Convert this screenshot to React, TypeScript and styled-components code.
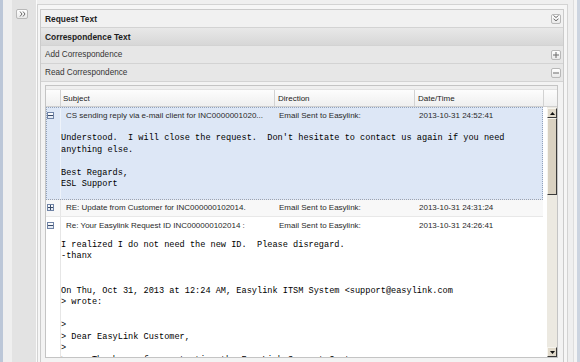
import styled, { createGlobalStyle } from "styled-components";

const GlobalStyle = createGlobalStyle`
  html, body {
    margin: 0;
    padding: 0;
    overflow: hidden;
  }
  body {
    background: #efefef;
    font-family: "Liberation Sans", Arial, sans-serif;
  }
`;

type Mail = {
  subject: string;
  direction: string;
  date: string;
  body?: string;
};

const mails: Mail[] = [
  {
    subject: "CS sending reply via e-mail client for INC0000001020...",
    direction: "Email Sent to Easylink:",
    date: "2013-10-31 24:52:41",
    body: `Understood.  I will close the request.  Don't hesitate to contact us again if you need
anything else.

Best Regards,
ESL Support`,
  },
  {
    subject: "RE: Update from Customer for INC000000102014.",
    direction: "Email Sent to Easylink:",
    date: "2013-10-31 24:31:24",
  },
  {
    subject: "Re: Your Easylink Request ID INC000000102014 :",
    direction: "Email Sent to Easylink:",
    date: "2013-10-31 24:26:41",
    body: `I realized I do not need the new ID.  Please disregard.
-thanx


On Thu, Oct 31, 2013 at 12:24 AM, Easylink ITSM System <support@easylink.com
> wrote:

>
> Dear EasyLink Customer,
>
>     Thank you for contacting the EasyLink Support Center.`,
  },
];

const App: React.FC = () => {
  return (
    <>
      <GlobalStyle />
      <Page>
        <SideBar>
          <SmallButton $w={12} $h={10}>
            <svg width="7" height="6" viewBox="0 0 7 6">
              <path d="M1 0.5 L3 3 L1 5.5 M4 0.5 L6 3 L4 5.5" stroke="#6a6a6a" fill="none" />
            </svg>
          </SmallButton>
        </SideBar>
        <Frame>
          <Accordion>
            <PanelHeader $variant="light" $bold>
              Request Text
              <SmallButton $w={10} $h={10}>
                <svg width="6" height="7" viewBox="0 0 6 7">
                  <path d="M0.5 0.5 L3 2.5 L5.5 0.5 M0.5 3.8 L3 5.8 L5.5 3.8" stroke="#6a6a6a" fill="none" />
                </svg>
              </SmallButton>
            </PanelHeader>
            <PanelHeader $variant="active" $bold>
              Correspondence Text
            </PanelHeader>
            <PanelHeader $variant="sub">
              Add Correspondence
              <SmallButton $w={10} $h={10}>
                <svg width="6" height="6" viewBox="0 0 6 6">
                  <path d="M0 3 H6 M3 0 V6" stroke="#6a6a6a" />
                </svg>
              </SmallButton>
            </PanelHeader>
            <PanelHeader $variant="sub">
              Read Correspondence
              <SmallButton $w={10} $h={10}>
                <svg width="6" height="6" viewBox="0 0 6 6">
                  <path d="M0 3 H6" stroke="#6a6a6a" />
                </svg>
              </SmallButton>
            </PanelHeader>
            <PanelContent>
              <Grid>
                <GridTop />
                <HeadRow>
                  <HeadCell $w={15} $pad={0} />
                  <HeadCell $w={214} $pad={2}>Subject</HeadCell>
                  <HeadCell $w={140} $pad={3}>Direction</HeadCell>
                  <HeadCell $w={129} $pad={3}>Date/Time</HeadCell>
                  <HeadCell $pad={0} $last />
                </HeadRow>
                <GridBody>
                  <Rows>
                    {mails.map((m, i) => (
                      <MailRow key={i} $selected={i === 0} $alt={i === 1}>
                        <RowHead $h={i === 1 ? 16 : 17}>
                          <ExpandCell $selected={i === 0}>
                            <Toggle>
                              <svg width="5" height="5" viewBox="0 0 5 5">
                                <path d={m.body ? "M0 2.5 H5" : "M0 2.5 H5 M2.5 0 V5"} stroke="#3a4a66" />
                              </svg>
                            </Toggle>
                          </ExpandCell>
                          <Cell $w={214} $pad={5}>{m.subject}</Cell>
                          <Cell $w={140} $pad={4}>{m.direction}</Cell>
                          <Cell $pad={4}>{m.date}</Cell>
                        </RowHead>
                        {m.body && (
                          <MailBody $selected={i === 0} $top={i === 0 ? 9 : 6}>
                            {m.body}
                          </MailBody>
                        )}
                      </MailRow>
                    ))}
                  </Rows>
                  <ScrollGap />
                  <ScrollBar>
                    <ScrollButton>
                      <svg width="5" height="3" viewBox="0 0 5 3">
                        <path d="M0 3 L2.5 0 L5 3 Z" fill="#111" />
                      </svg>
                    </ScrollButton>
                    <Thumb />
                    <Track />
                    <ScrollButton>
                      <svg width="5" height="3" viewBox="0 0 5 3">
                        <path d="M0 0 L2.5 3 L5 0 Z" fill="#111" />
                      </svg>
                    </ScrollButton>
                  </ScrollBar>
                </GridBody>
              </Grid>
            </PanelContent>
          </Accordion>
        </Frame>
        <RightEdge />
      </Page>
    </>
  );
};

const Page = styled.div`
  display: flex;
  width: 580px;
  height: 362px;
  box-sizing: border-box;
  border-left: 3px solid #bcc7d8;
  padding-left: 9px;
  background: #efefef;
  overflow: hidden;
`;

const SideBar = styled.div`
  flex: none;
  width: 25px;
  box-sizing: border-box;
  background: #e3e3e3;
  border-right: 1px solid #fafafa;
  padding: 9px 0 0 4px;
`;

const SmallButton = styled.div<{ $w: number; $h: number }>`
  width: ${(p) => p.$w}px;
  height: ${(p) => p.$h}px;
  box-sizing: border-box;
  border: 1px solid #b8b8b8;
  border-radius: 2px;
  background: linear-gradient(#ffffff, #e9e9e9);
  display: flex;
  align-items: center;
  justify-content: center;
  flex: none;
`;

const Frame = styled.div`
  flex: none;
  width: 531px;
  box-sizing: border-box;
  margin-top: 4px;
  border: 1px solid #d3d3d3;
  border-bottom: none;
  background: #f6f6f6;
  padding: 4px 3px 0 2px;
  display: flex;
  flex-direction: column;
`;

const RightEdge = styled.div`
  flex: 1;
  background: linear-gradient(
    to right,
    #efefef 0 5px,
    #dddddd 5px 6px,
    #f4f4f4 6px 9px,
    #ccd4e0 9px
  );
`;

const Accordion = styled.div`
  flex: 1;
  display: flex;
  flex-direction: column;
  border: 1px solid #cbcbcb;
  border-bottom: none;
  background: #f1f1f1;
  min-height: 0;
`;

const headerBg = {
  light: "#f1f1f1",
  active: "linear-gradient(#e8e8e8, #d7d7d7)",
  sub: "#e7e7e7",
};

const PanelHeader = styled.div<{ $variant: keyof typeof headerBg; $bold?: boolean }>`
  height: 17px;
  flex: none;
  display: flex;
  align-items: center;
  justify-content: space-between;
  padding: 0 2px 0 4px;
  border-bottom: 1px solid #d3d3d3;
  background: ${(p) => headerBg[p.$variant]};
  font-size: ${(p) => (p.$bold ? "8.4px" : "8.2px")};
  font-weight: ${(p) => (p.$bold ? "bold" : "normal")};
  color: ${(p) => (p.$bold ? "#1d1d1d" : "#353535")};
`;

const PanelContent = styled.div`
  flex: 1;
  min-height: 0;
  display: flex;
  padding: 3px 5px 4px 4px;
  background: #f3f3f3;
`;

const Grid = styled.div`
  flex: 1;
  display: flex;
  flex-direction: column;
  border: 1px solid #c4c4c4;
  background: #ffffff;
  min-height: 0;
`;

const GridTop = styled.div`
  height: 3px;
  flex: none;
  background: #efefef;
`;

const HeadRow = styled.div`
  height: 16px;
  flex: none;
  display: flex;
  border-top: 1px solid #e2e2e2;
  border-bottom: 1px solid #cfcfcf;
  background: linear-gradient(#fdfdfd, #efefef);
`;

const HeadCell = styled.div<{ $w?: number; $pad: number; $last?: boolean }>`
  ${(p) => (p.$w ? `width: ${p.$w}px; flex: none;` : "flex: 1;")}
  box-sizing: border-box;
  padding-left: ${(p) => p.$pad}px;
  border-right: ${(p) => (p.$last ? "none" : "1px solid #d2d2d2")};
  display: flex;
  align-items: center;
  font-size: 8px;
  color: #222;
`;

const GridBody = styled.div`
  flex: 1;
  min-height: 0;
  display: flex;
`;

const Rows = styled.div`
  flex: 1;
  overflow: hidden;
`;

const MailRow = styled.div<{ $selected: boolean; $alt: boolean }>`
  border-bottom: 1px solid #e8e8e8;
  background: ${(p) => (p.$selected ? "#dde7f6" : p.$alt ? "#f8f8f8" : "#ffffff")};
  outline: ${(p) => (p.$selected ? "1px dotted #93a2bb" : "none")};
  outline-offset: -1px;
`;

const RowHead = styled.div<{ $h: number }>`
  height: ${(p) => p.$h}px;
  display: flex;
  align-items: center;
  font-size: 8px;
  color: #2a2a2a;
`;

const ExpandCell = styled.div<{ $selected: boolean }>`
  width: 15px;
  height: 100%;
  box-sizing: border-box;
  flex: none;
  padding-left: 1px;
  display: flex;
  align-items: center;
  border-right: 1px solid ${(p) => (p.$selected ? "#eef3fa" : "#e6e6e6")};
`;

const Toggle = styled.div`
  width: 7px;
  height: 7px;
  box-sizing: border-box;
  border: 1px solid #6f83a6;
  background: linear-gradient(#ffffff, #dfe6f1);
  display: flex;
  align-items: center;
  justify-content: center;
`;

const Cell = styled.div<{ $w?: number; $pad: number }>`
  ${(p) => (p.$w ? `width: ${p.$w}px; flex: none;` : "flex: 1;")}
  box-sizing: border-box;
  padding-left: ${(p) => p.$pad}px;
  white-space: nowrap;
  overflow: hidden;
`;

const MailBody = styled.pre<{ $selected: boolean; $top: number }>`
  margin: 0 0 0 14px;
  padding: ${(p) => p.$top}px 0 8px 0;
  border-left: 1px solid ${(p) => (p.$selected ? "#eef3fa" : "#e6e6e6")};
  font-family: "Liberation Mono", "Courier New", monospace;
  font-size: 8.6px;
  line-height: 11.5px;
  color: #000;
  white-space: pre;
`;

const ScrollGap = styled.div`
  width: 4px;
  flex: none;
  background: #ffffff;
`;

const ScrollBar = styled.div`
  width: 10px;
  flex: none;
  display: flex;
  flex-direction: column;
  padding-top: 1px;
  background: #ece9e1;
`;

const raised = `
  box-sizing: border-box;
  border: 1px solid;
  border-color: #f7f5ef #3a3a3a #3a3a3a #f7f5ef;
`;

const ScrollButton = styled.div`
  ${raised}
  height: 10px;
  flex: none;
  background: #e1dacb;
  display: flex;
  align-items: center;
  justify-content: center;
`;

const Thumb = styled.div`
  ${raised}
  height: 77px;
  flex: none;
  background: #d9d1c1;
`;

const Track = styled.div`
  flex: 1;
`;

export default App;
